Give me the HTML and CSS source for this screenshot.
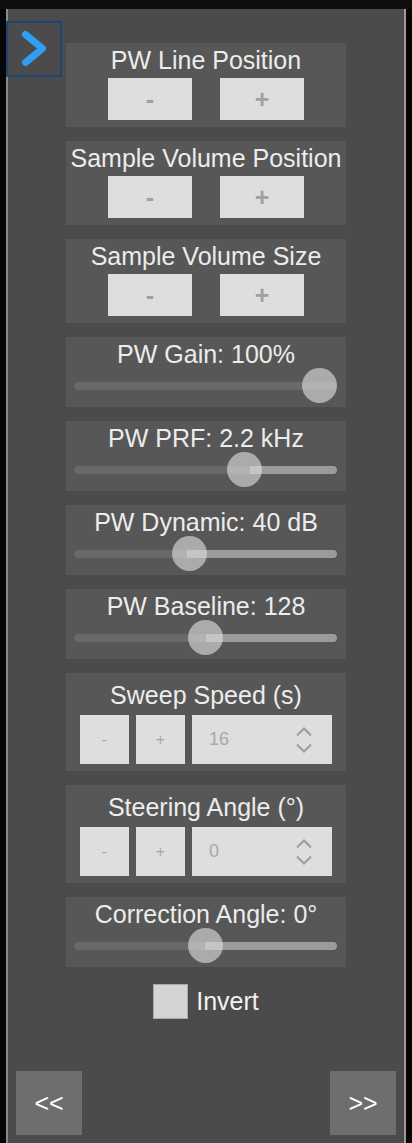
FILE: index.html
```html
<!DOCTYPE html>
<html>
<head>
<meta charset="utf-8">
<link rel="stylesheet" href="styles.css">
</head>
<body>
<div class="topbar"></div>
<div class="panel">
  <button class="toggle" aria-label="toggle">
    <svg width="56" height="56" viewBox="0 0 56 56"><polyline points="19.5,13.5 36.5,27.5 19.5,41.5" fill="none" stroke="#2f9ef3" stroke-width="7" stroke-linecap="round" stroke-linejoin="round"/></svg>
  </button>

  <div class="card">
    <div class="card-title">PW Line Position</div>
    <div class="btn-row"><button class="btn">-</button><button class="btn">+</button></div>
  </div>
  <div class="card">
    <div class="card-title">Sample Volume Position</div>
    <div class="btn-row"><button class="btn">-</button><button class="btn">+</button></div>
  </div>
  <div class="card">
    <div class="card-title">Sample Volume Size</div>
    <div class="btn-row"><button class="btn">-</button><button class="btn">+</button></div>
  </div>

  <div class="card slider-card">
    <div class="card-title">PW Gain: 100%</div>
    <div class="slider" style="--p:1"><div class="track"></div><div class="thumb"></div></div>
  </div>
  <div class="card slider-card">
    <div class="card-title">PW PRF: 2.2 kHz</div>
    <div class="slider" style="--p:0.67"><div class="track"></div><div class="thumb"></div></div>
  </div>
  <div class="card slider-card">
    <div class="card-title">PW Dynamic: 40 dB</div>
    <div class="slider" style="--p:0.4286"><div class="track"></div><div class="thumb"></div></div>
  </div>
  <div class="card slider-card">
    <div class="card-title">PW Baseline: 128</div>
    <div class="slider" style="--p:0.502"><div class="track"></div><div class="thumb"></div></div>
  </div>

  <div class="card stepper-card">
    <div class="card-title">Sweep Speed (s)</div>
    <div class="stepper">
      <button class="sbtn">-</button><button class="sbtn">+</button>
      <div class="num"><span>16</span>
        <svg class="spin" width="18" height="28" viewBox="0 0 18 28"><polyline points="2,9.5 9,2.5 16,9.5" fill="none" stroke="#9e9e9e" stroke-width="2.2"/><polyline points="2,18.5 9,25.5 16,18.5" fill="none" stroke="#9e9e9e" stroke-width="2.2"/></svg>
      </div>
    </div>
  </div>
  <div class="card stepper-card">
    <div class="card-title">Steering Angle (°)</div>
    <div class="stepper">
      <button class="sbtn">-</button><button class="sbtn">+</button>
      <div class="num"><span>0</span>
        <svg class="spin" width="18" height="28" viewBox="0 0 18 28"><polyline points="2,9.5 9,2.5 16,9.5" fill="none" stroke="#9e9e9e" stroke-width="2.2"/><polyline points="2,18.5 9,25.5 16,18.5" fill="none" stroke="#9e9e9e" stroke-width="2.2"/></svg>
      </div>
    </div>
  </div>

  <div class="card slider-card">
    <div class="card-title">Correction Angle: 0°</div>
    <div class="slider" style="--p:0.5"><div class="track"></div><div class="thumb"></div></div>
  </div>

  <label class="check-row"><span class="checkbox"></span><span class="check-label">Invert</span></label>

  <div class="nav">
    <button class="nav-btn">&lt;&lt;</button>
    <button class="nav-btn">&gt;&gt;</button>
  </div>
</div>
</body>
</html>
```

FILE: styles.css
```css
html, body {
  margin: 0;
  padding: 0;
}
body {
  background: #060606;
  font-family: "Liberation Sans", Arial, sans-serif;
  width: 412px;
  height: 1143px;
  overflow: hidden;
}
.topbar {
  height: 9px;
  background: #0e0e0e;
}
.panel {
  position: relative;
  margin: 0 6px;
  height: 1134px;
  box-sizing: border-box;
  border-left: 2px solid #8a8a8a;
  border-right: 2px solid #9a9a9a;
  background: #4b4b4b;
  display: flex;
  flex-direction: column;
  align-items: center;
  gap: 14px;
  padding-top: 34px;
}
.toggle {
  position: absolute;
  left: -2px;
  top: 12px;
  width: 56px;
  height: 56px;
  box-sizing: border-box;
  margin: 0;
  padding: 0;
  border: 2px solid #1d4573;
  background: transparent;
}
.toggle svg {
  position: absolute;
  left: -2px;
  top: -2px;
  display: block;
}
.card {
  width: 280px;
  box-sizing: border-box;
  background: #575757;
  padding: 3px 0 7px;
  display: flex;
  flex-direction: column;
  align-items: center;
}
.card-title {
  font-size: 25px;
  line-height: 28px;
  color: #ececec;
  white-space: nowrap;
}
.btn-row {
  display: flex;
  gap: 28px;
  margin-top: 4px;
}
.btn {
  width: 84px;
  height: 42px;
  margin: 0;
  padding: 0;
  border: none;
  background: #dedede;
  color: #a0a0a0;
  font-family: "Liberation Sans", Arial, sans-serif;
  font-weight: bold;
  font-size: 25px;
  display: flex;
  align-items: center;
  justify-content: center;
}
.slider-card {
  padding: 3px 0 4px;
  align-items: center;
}
.slider {
  position: relative;
  align-self: flex-start;
  margin-left: 8px;
  width: 263px;
  height: 35px;
  display: flex;
  align-items: center;
}
.track {
  width: 100%;
  height: 8px;
  border-radius: 4px;
  margin-top: 1px;
  background: linear-gradient(to right, #696969 calc(var(--p) * 100%), #9b9b9b calc(var(--p) * 100%));
}
.thumb {
  position: absolute;
  top: 0;
  left: calc(var(--p) * (100% - 35px));
  width: 35px;
  height: 35px;
  border-radius: 50%;
  background: rgba(222, 222, 222, 0.62);
}
.stepper-card {
  padding: 8px 14px 7px;
}
.stepper {
  display: flex;
  gap: 7px;
  margin-top: 6px;
}
.sbtn {
  width: 49px;
  height: 49px;
  margin: 0;
  padding: 0;
  border: none;
  background: #dedede;
  color: #a8a8a8;
  font-family: "Liberation Sans", Arial, sans-serif;
  font-size: 16px;
  display: flex;
  align-items: center;
  justify-content: center;
}
.num {
  width: 140px;
  height: 49px;
  box-sizing: border-box;
  background: #dedede;
  color: #a8a8a8;
  font-size: 18px;
  display: flex;
  align-items: center;
  justify-content: space-between;
  padding: 0 19px 0 17px;
}
.spin {
  display: block;
}
.check-row {
  display: flex;
  align-items: center;
  gap: 8px;
  margin-top: 3px;
}
.checkbox {
  width: 35px;
  height: 35px;
  box-sizing: border-box;
  background: #d4d4d4;
  border: 1px solid #a9a9a9;
}
.check-label {
  font-size: 25px;
  line-height: 35px;
  color: #f2f2f2;
}
.nav {
  margin-top: auto;
  align-self: stretch;
  display: flex;
  justify-content: space-between;
  padding: 0 8px 8px;
}
.nav-btn {
  width: 66px;
  height: 64px;
  margin: 0;
  padding: 0;
  border: none;
  background: #6e6e6e;
  color: #ffffff;
  font-family: "Liberation Sans", Arial, sans-serif;
  font-size: 25px;
  display: flex;
  align-items: center;
  justify-content: center;
}
```
